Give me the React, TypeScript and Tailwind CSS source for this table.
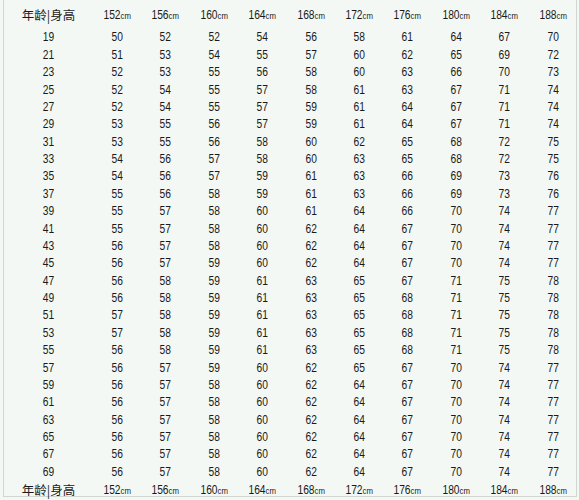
const heights = [152, 156, 160, 164, 168, 172, 176, 180, 184, 188];

// age, then weight for each height column
const rows: number[][] = [
  [19, 50, 52, 52, 54, 56, 58, 61, 64, 67, 70],
  [21, 51, 53, 54, 55, 57, 60, 62, 65, 69, 72],
  [23, 52, 53, 55, 56, 58, 60, 63, 66, 70, 73],
  [25, 52, 54, 55, 57, 58, 61, 63, 67, 71, 74],
  [27, 52, 54, 55, 57, 59, 61, 64, 67, 71, 74],
  [29, 53, 55, 56, 57, 59, 61, 64, 67, 71, 74],
  [31, 53, 55, 56, 58, 60, 62, 65, 68, 72, 75],
  [33, 54, 56, 57, 58, 60, 63, 65, 68, 72, 75],
  [35, 54, 56, 57, 59, 61, 63, 66, 69, 73, 76],
  [37, 55, 56, 58, 59, 61, 63, 66, 69, 73, 76],
  [39, 55, 57, 58, 60, 61, 64, 66, 70, 74, 77],
  [41, 55, 57, 58, 60, 62, 64, 67, 70, 74, 77],
  [43, 56, 57, 58, 60, 62, 64, 67, 70, 74, 77],
  [45, 56, 57, 59, 60, 62, 64, 67, 70, 74, 77],
  [47, 56, 58, 59, 61, 63, 65, 67, 71, 75, 78],
  [49, 56, 58, 59, 61, 63, 65, 68, 71, 75, 78],
  [51, 57, 58, 59, 61, 63, 65, 68, 71, 75, 78],
  [53, 57, 58, 59, 61, 63, 65, 68, 71, 75, 78],
  [55, 56, 58, 59, 61, 63, 65, 68, 71, 75, 78],
  [57, 56, 57, 59, 60, 62, 65, 67, 70, 74, 77],
  [59, 56, 57, 58, 60, 62, 64, 67, 70, 74, 77],
  [61, 56, 57, 58, 60, 62, 64, 67, 70, 74, 77],
  [63, 56, 57, 58, 60, 62, 64, 67, 70, 74, 77],
  [65, 56, 57, 58, 60, 62, 64, 67, 70, 74, 77],
  [67, 56, 57, 58, 60, 62, 64, 67, 70, 74, 77],
  [69, 56, 57, 58, 60, 62, 64, 67, 70, 74, 77],
];

const grid = "grid grid-cols-[89px_repeat(10,48.4px)] items-center";

function HeaderRow({ className }: { className: string }) {
  return (
    <div className={`${grid} ${className}`}>
      <div className="text-center text-[12.5px] font-['Noto_Sans_CJK_SC',sans-serif] text-[#1a1a1a]">
        年龄|身高
      </div>
      {heights.map((h) => (
        <div key={h} className="text-center text-[12.5px] text-[#1a1a1a] scale-x-[0.82]">
          {h}
          <span className="text-[9.5px]">cm</span>
        </div>
      ))}
    </div>
  );
}

export default function App() {
  return (
    <div className="w-[579px] h-[500px] bg-[#f4f8f4] font-['Liberation_Sans',Arial,sans-serif] overflow-hidden">
      <div className="ml-[3px] w-[574px] h-[497px] border-l border-r border-b border-[#cfd8cf]">
        <HeaderRow className="h-[29px] pt-px" />
        {rows.map((r) => (
          <div key={r[0]} className={`${grid} h-[17.38px]`}>
            {r.map((v, i) => (
              <div key={i} className="text-center text-[12.5px] leading-none text-[#1a1a1a] scale-x-[0.82]">
                {v}
              </div>
            ))}
          </div>
        ))}
        <HeaderRow className="h-[15px]" />
      </div>
    </div>
  );
}
